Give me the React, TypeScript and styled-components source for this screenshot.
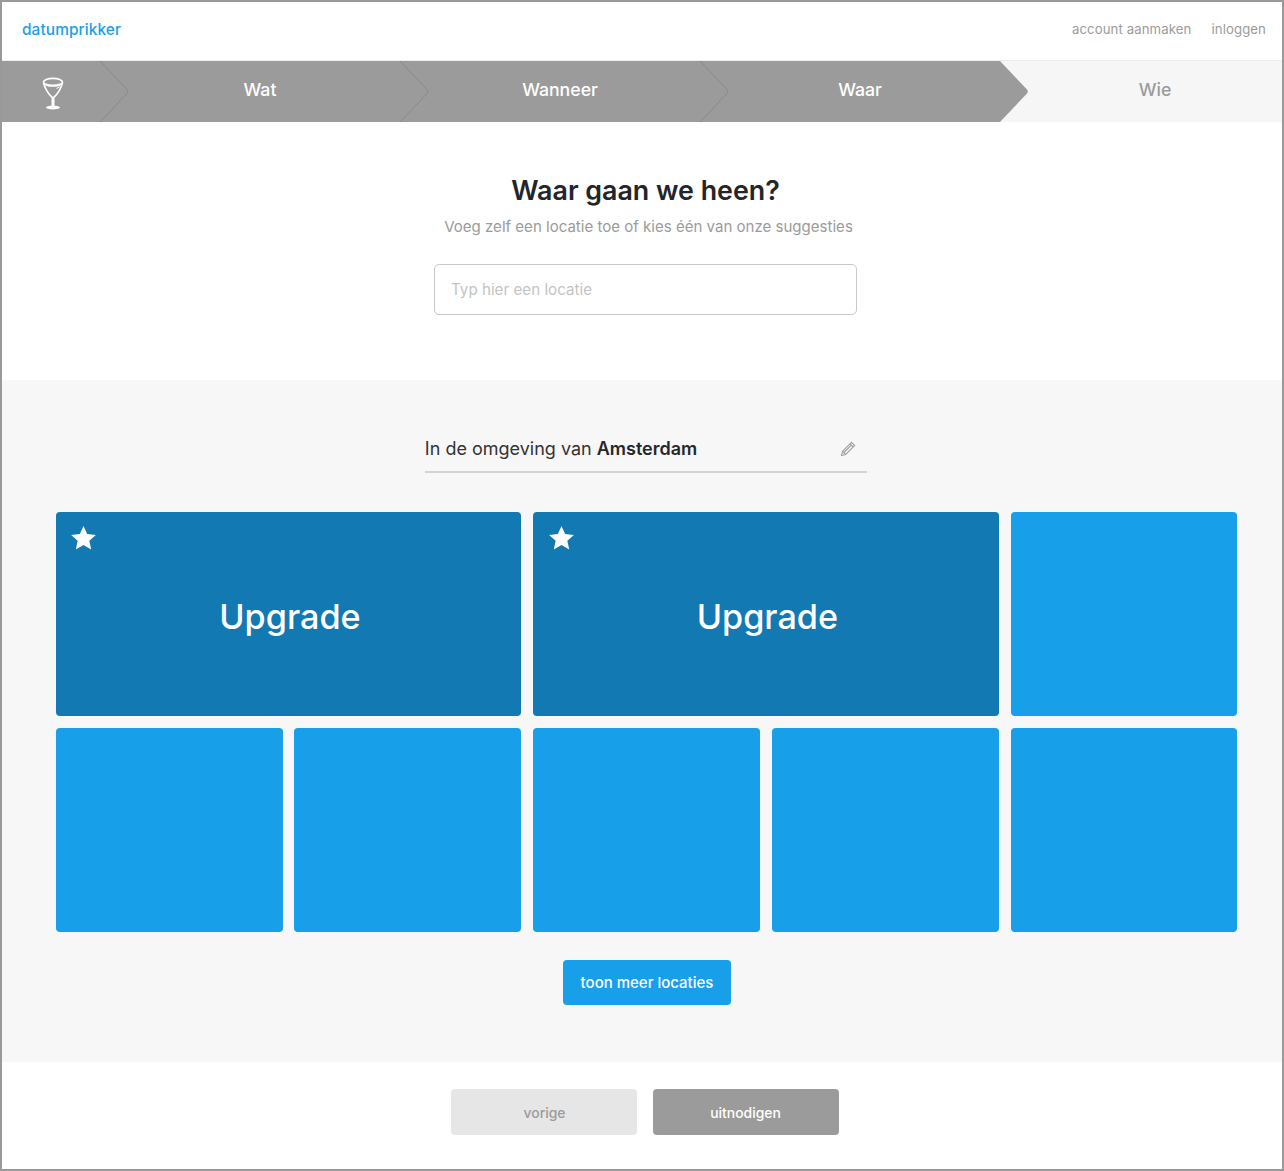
import React from "react";
import styled, { createGlobalStyle } from "styled-components";

const Global = createGlobalStyle`
  html, body { margin: 0; padding: 0; background: #fff; }
  body { font-family: Inter, "Noto Sans", sans-serif; }
  * { box-sizing: border-box; }
`;

const Frame = styled.div`
  width: 1284px;
  height: 1171px;
  border: 2px solid #999;
  display: flex;
  flex-direction: column;
  background: #fff;
`;
const Header = styled.header`
  height: 59px;
  display: flex;
  align-items: center;
  justify-content: space-between;
  padding: 0 16px 4px 20px;
  border-bottom: 1px solid #eee;
`;
const Logo = styled.a`
  color: #189fea;
  font-size: 15.4px;
  font-weight: 500;
  font-family: Inter, sans-serif;
  letter-spacing: 0.1px;
`;
const Nav = styled.nav`
  display: flex;
  gap: 20px;
`;
const NavLink = styled.a`
  color: #9b9b9b;
  font-size: 13.2px;
  letter-spacing: 0.1px;
  font-family: Inter, sans-serif;
`;
const Steps = styled.div`
  height: 61px;
  display: flex;
  background: #9b9b9b;
`;
const Step = styled.div<{ $w: number; $pad: number }>`
  position: relative;
  flex: 0 0 ${(p) => p.$w}px;
  display: flex;
  align-items: center;
  justify-content: center;
  padding: 0 ${(p) => p.$pad}px 5px 0;
  color: #fff;
  font-family: Inter, sans-serif;
  font-size: 17.7px;
  font-weight: 500;
`;
const RestStep = styled.div`
  position: relative;
  flex: 1;
  display: flex;
  align-items: center;
  justify-content: center;
  padding: 0 0 5px 28px;
  color: #9b9b9b;
  background: #f6f6f6;
  font-family: Inter, sans-serif;
  font-size: 17.7px;
  font-weight: 500;
`;
const Chevron = styled.svg`
  position: absolute;
  top: 0;
  right: -1px;
  width: 29px;
  height: 61px;
`;
const Arrow = styled.svg`
  position: absolute;
  top: 0;
  left: 0;
  width: 29px;
  height: 61px;
`;
const GlassIcon = styled.svg`
  margin-top: 9px;
`;
const Intro = styled.section`
  height: 258px;
  display: flex;
  flex-direction: column;
  align-items: center;
  padding: 52px 0 0 7px;
`;
const Title = styled.h1`
  margin: 0;
  color: #22252a;
  font-family: Inter, sans-serif;
  font-size: 26.8px;
  line-height: 32px;
  font-weight: 600;
`;
const Sub = styled.p`
  margin: 11px 0 0 6px;
  color: #9b9b9b;
  font-family: Inter, sans-serif;
  font-size: 15.05px;
  line-height: 20px;
`;
const Input = styled.input`
  margin-top: 27px;
  width: 423px;
  height: 51px;
  border: 1px solid #c8c8c8;
  border-radius: 5px;
  padding: 0 16px;
  font-family: Inter, sans-serif;
  font-size: 15.2px;
  outline: none;
  &::placeholder { color: #c4c4c4; opacity: 1; }
`;
const Suggest = styled.section`
  flex: 1;
  background: #f7f7f7;
  display: flex;
  flex-direction: column;
  align-items: center;
  padding: 51px 0 0 53.7px;
`;
const Place = styled.div`
  width: 442px;
  height: 42px;
  display: flex;
  align-items: center;
  justify-content: space-between;
  border-bottom: 2px solid #d4d4d4;
  padding: 0 11px 5px 0;
  color: #333;
  font-family: Inter, sans-serif;
  font-size: 18px;
  margin-left: -46px;
  b { font-weight: 600; color: #26282c; }
`;
const Grid = styled.div`
  margin-top: 39px;
  width: 100%;
  display: grid;
  grid-template-columns: repeat(5, 226.9px);
  grid-auto-rows: 204px;
  column-gap: 11.82px;
  row-gap: 12px;
`;
const Tile = styled.div<{ $wide?: boolean }>`
  position: relative;
  grid-column: span ${(p) => (p.$wide ? 2 : 1)};
  border-radius: 4px;
  background: ${(p) => (p.$wide ? "#1279b3" : "#189fea")};
  display: flex;
  align-items: center;
  justify-content: center;
  padding: 5px 0 0 3px;
  color: #fff;
  font-family: Inter, sans-serif;
  font-size: 34.2px;
  font-weight: 500;
`;
const StarMark = styled.svg`
  position: absolute;
  left: 15.5px;
  top: 14px;
  width: 25px;
  height: 24px;
`;
const More = styled.button`
  margin: 28px 0 0 -43.7px;
  width: 168px;
  height: 45px;
  border: 0;
  border-radius: 4px;
  background: #189fea;
  color: #fff;
  font-family: Inter, sans-serif;
  font-size: 15px;
  font-weight: 500;
`;
const Footer = styled.footer`
  height: 107px;
  display: flex;
  justify-content: center;
  gap: 16px;
  padding: 27px 0 0 5px;
`;
const FootBtn = styled.button<{ $dark?: boolean }>`
  width: 186px;
  height: 46px;
  border: 0;
  border-radius: 4px;
  padding: 2px 0 0 ${(p) => (p.$dark ? 0 : 2)}px;
  background: ${(p) => (p.$dark ? "#9b9b9b" : "#e6e6e6")};
  color: ${(p) => (p.$dark ? "#fff" : "#9b9b9b")};
  font-family: Inter, sans-serif;
  font-size: 13.9px;
  font-weight: 500;
`;

const Glass = () => (
  <GlassIcon width="22" height="34" viewBox="0 0 22 34" fill="none" stroke="#fff" strokeWidth="1.6">
    <ellipse cx="11" cy="5.200" rx="9.500" ry="3.800" />
    <path d="M3.500 6.800c4 1.800 11 1.800 15 0" strokeWidth="1.100" />
    <path d="M1.500 5.500C2.500 11 7 18 10.300 20.500V29M20.500 5.500C19.500 11 15 18 11.700 20.500V29" />
    <path d="M14.500 11.500l3-1.500" strokeWidth="1" />
    <ellipse cx="11" cy="30.500" rx="7" ry="1.900" fill="#fff" stroke="none" />
  </GlassIcon>
);
const Sep = () => (
  <Chevron viewBox="0 0 29 61" fill="none">
    <path d="M0 0 L27 28.500 Q28.400 30.500 27 32.500 L0 61" stroke="#8a8a8a" strokeWidth="1" />
  </Chevron>
);
const Star = () => (
  <StarMark viewBox="0 0 24 23">
    <path fill="#fff" d="M12 0l3.500 7.700 8.400.9-6.300 5.600 1.800 8.300L12 18.300 4.600 22.500l1.800-8.300L.1 8.600l8.400-.9z" />
  </StarMark>
);
const Pencil = () => (
  <svg width="16" height="16" viewBox="0 0 16 16" fill="none" stroke="#a0a0a0" strokeWidth="1.100">
    <path d="M1.500 14.500l1-4.200L11.500 1.300l3.200 3.200-9 9z" />
    <path d="M2.500 10.300l3.200 3.200M10 2.800l3.200 3.200M4 11.500l7.800-7.800" />
  </svg>
);

export default function App() {
  return (
    <>
      <Global />
      <Frame>
        <Header>
          <Logo>datumprikker</Logo>
          <Nav>
            <NavLink>account aanmaken</NavLink>
            <NavLink>inloggen</NavLink>
          </Nav>
        </Header>
        <Steps>
          <Step $w={126} $pad={24}><Glass /><Sep /></Step>
          <Step $w={300} $pad={36}>Wat<Sep /></Step>
          <Step $w={300} $pad={36}>Wanneer<Sep /></Step>
          <Step $w={272} $pad={8}>Waar</Step>
          <RestStep>
            <Arrow viewBox="0 0 29 61">
              <path fill="#9b9b9b" d="M0 0 L27 28.500 Q28.400 30.500 27 32.500 L0 61 Z" />
            </Arrow>
            Wie
          </RestStep>
        </Steps>
        <Intro>
          <Title>Waar gaan we heen?</Title>
          <Sub>Voeg zelf een locatie toe of kies één van onze suggesties</Sub>
          <Input placeholder="Typ hier een locatie" readOnly />
        </Intro>
        <Suggest>
          <Place>
            <span>In de omgeving van <b>Amsterdam</b></span>
            <Pencil />
          </Place>
          <Grid>
            <Tile $wide><Star />Upgrade</Tile>
            <Tile $wide><Star />Upgrade</Tile>
            <Tile />
            <Tile />
            <Tile />
            <Tile />
            <Tile />
            <Tile />
          </Grid>
          <More>toon meer locaties</More>
        </Suggest>
        <Footer>
          <FootBtn>vorige</FootBtn>
          <FootBtn $dark>uitnodigen</FootBtn>
        </Footer>
      </Frame>
    </>
  );
}
